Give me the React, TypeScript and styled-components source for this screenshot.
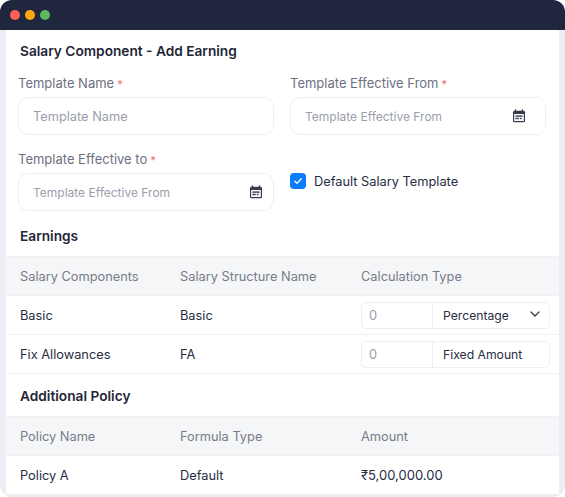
import React from 'react';
import styled, { createGlobalStyle } from 'styled-components';

const GlobalStyle = createGlobalStyle`
  html, body { margin: 0; padding: 0; background: #fff; }
  body { font-family: 'Inter', 'Liberation Sans', sans-serif; }
`;

const Window = styled.div`
  width: 565px;
  height: 497px;
  box-sizing: border-box;
  display: flex;
  flex-direction: column;
  background: #eceef3;
  border-radius: 12px;
  overflow: hidden;
`;

const TitleBar = styled.div`
  height: 30px;
  flex: none;
  display: flex;
  align-items: center;
  gap: 5px;
  padding-left: 10px;
  background: #1f263d;
`;

const Dot = styled.span<{ $color: string }>`
  width: 10px;
  height: 10px;
  border-radius: 50%;
  background: ${p => p.$color};
`;

const Panel = styled.div`
  height: 464px;
  margin: 0 6px;
  background: #fff;
  display: flex;
  flex-direction: column;
`;

const SectionTitle = styled.h3<{ $height: number; $top: number }>`
  margin: 0;
  height: ${p => p.$height}px;
  box-sizing: border-box;
  flex: none;
  display: flex;
  align-items: center;
  padding: ${p => p.$top}px 0 0 14px;
  font-size: 13.7px;
  line-height: 17px;
  font-weight: 600;
  color: #1f2637;
`;

const FormGrid = styled.div`
  display: grid;
  grid-template-columns: 256px 256px;
  column-gap: 16px;
  row-gap: 11px;
  padding: 0 12px;
`;

const Field = styled.div`
  display: flex;
  flex-direction: column;
`;

const Label = styled.label`
  height: 27px;
  padding-top: 5px;
  box-sizing: border-box;
  font-size: 13px;
  line-height: 17px;
  color: #6d7080;
`;

const Required = styled.span`
  margin-left: 3px;
  font-size: 11px;
  color: #ef6a6a;
`;

const InputBox = styled.div<{ $right?: number }>`
  height: 38px;
  box-sizing: border-box;
  display: flex;
  align-items: center;
  justify-content: space-between;
  padding: 0 ${p => p.$right ?? 19}px 0 14px;
  border: 1px solid #eceef1;
  border-radius: 10px;
  background: #fff;
`;

const Placeholder = styled.span<{ $size: number }>`
  font-size: ${p => p.$size}px;
  color: #9a9eab;
`;

const CheckField = styled.div`
  display: flex;
  align-items: flex-start;
  gap: 8px;
  padding-top: 27px;
`;

const CheckBox = styled.span`
  width: 16px;
  height: 16px;
  flex: none;
  display: flex;
  align-items: center;
  justify-content: center;
  border-radius: 4px;
  background: #0b7dfb;
`;

const CheckLabel = styled.span`
  font-size: 12.8px;
  line-height: 17px;
  color: #272d3f;
`;

const Row = styled.div<{ $head?: boolean; $height: number }>`
  height: ${p => p.$height}px;
  box-sizing: border-box;
  flex: none;
  display: grid;
  grid-template-columns: 160px 181px 1fr;
  align-items: center;
  padding: 0 9px 0 14px;
  border-top: 1px solid #eef0f2;
  font-size: 12.8px;
  color: ${p => (p.$head ? '#777b8a' : '#272d3f')};
  background: ${p => (p.$head ? '#f5f6f7' : '#fff')};
`;

const RowBottom = styled.div`
  height: 1px;
  flex: none;
  background: #eef0f2;
`;

const Money = styled.span`
  font-size: 13px;
`;

const AmountGroup = styled.div`
  height: 27px;
  box-sizing: border-box;
  display: grid;
  grid-template-columns: 71px 1fr;
  align-items: center;
  border: 1px solid #eceef1;
  border-radius: 5px;
`;

const AmountValue = styled.span`
  height: 100%;
  display: flex;
  align-items: center;
  padding-left: 7px;
  border-right: 1px solid #eceef1;
  color: #9a9eab;
`;

const TypeValue = styled.span`
  display: flex;
  align-items: center;
  justify-content: space-between;
  padding: 0 8px 0 10px;
  font-size: 12.2px;
  color: #272d3f;
`;

const CalendarIcon = () => (
  <svg width="14" height="14" viewBox="0 0 14 14" fill="none">
    <path d="M3.5 0.8v2M10.5 0.8v2" stroke="#373c4b" strokeWidth="1.3" strokeLinecap="round" />
    <rect x="1" y="1.8" width="12" height="11.4" rx="1.5" fill="#373c4b" />
    <rect x="2.2" y="5" width="9.6" height="7" fill="#fff" />
    <rect x="3.4" y="6.4" width="7.2" height="1.4" fill="#373c4b" />
    <rect x="3.4" y="8.8" width="3.4" height="1.4" fill="#373c4b" />
    <rect x="7.8" y="8.8" width="1.8" height="1.4" fill="#373c4b" />
  </svg>
);

const Chevron = () => (
  <svg width="12" height="12" viewBox="0 0 12 12" fill="none">
    <path d="M2 3l4 4 4-4" stroke="#373c4b" strokeWidth="1.3" strokeLinecap="round" strokeLinejoin="round" />
  </svg>
);

const App: React.FC = () => (
  <>
    <GlobalStyle />
    <Window>
      <TitleBar>
        <Dot $color="#ff6059" />
        <Dot $color="#ffa90f" />
        <Dot $color="#5cb85f" />
      </TitleBar>
      <Panel>
        <SectionTitle $height={40} $top={2}>Salary Component - Add Earning</SectionTitle>
        <FormGrid>
          <Field>
            <Label>Template Name<Required>*</Required></Label>
            <InputBox><Placeholder $size={12.8}>Template Name</Placeholder></InputBox>
          </Field>
          <Field>
            <Label>Template Effective From<Required>*</Required></Label>
            <InputBox><Placeholder $size={12}>Template Effective From</Placeholder><CalendarIcon /></InputBox>
          </Field>
          <Field>
            <Label>Template Effective to<Required>*</Required></Label>
            <InputBox $right={10}><Placeholder $size={12}>Template Effective From</Placeholder><CalendarIcon /></InputBox>
          </Field>
          <CheckField>
            <CheckBox>
              <svg width="10" height="10" viewBox="0 0 10 10" fill="none">
                <path d="M1.8 5.2l2.2 2.2 4.2-4.6" stroke="#fff" strokeWidth="1.3" strokeLinecap="round" strokeLinejoin="round" />
              </svg>
            </CheckBox>
            <CheckLabel>Default Salary Template</CheckLabel>
          </CheckField>
        </FormGrid>
        <SectionTitle $height={45} $top={5}>Earnings</SectionTitle>
        <Row $head $height={39}>
          <span>Salary Components</span>
          <span>Salary Structure Name</span>
          <span>Calculation Type</span>
        </Row>
        <Row $height={39}>
          <span>Basic</span>
          <span>Basic</span>
          <AmountGroup>
            <AmountValue>0</AmountValue>
            <TypeValue>Percentage<Chevron /></TypeValue>
          </AmountGroup>
        </Row>
        <Row $height={39}>
          <span>Fix Allowances</span>
          <span>FA</span>
          <AmountGroup>
            <AmountValue>0</AmountValue>
            <TypeValue>Fixed Amount</TypeValue>
          </AmountGroup>
        </Row>
        <RowBottom />
        <SectionTitle $height={42} $top={2}>Additional Policy</SectionTitle>
        <Row $head $height={39}>
          <span>Policy Name</span>
          <span>Formula Type</span>
          <span>Amount</span>
        </Row>
        <Row $height={39}>
          <span>Policy A</span>
          <span>Default</span>
          <Money>₹5,00,000.00</Money>
        </Row>
      </Panel>
    </Window>
  </>
);

export default App;
